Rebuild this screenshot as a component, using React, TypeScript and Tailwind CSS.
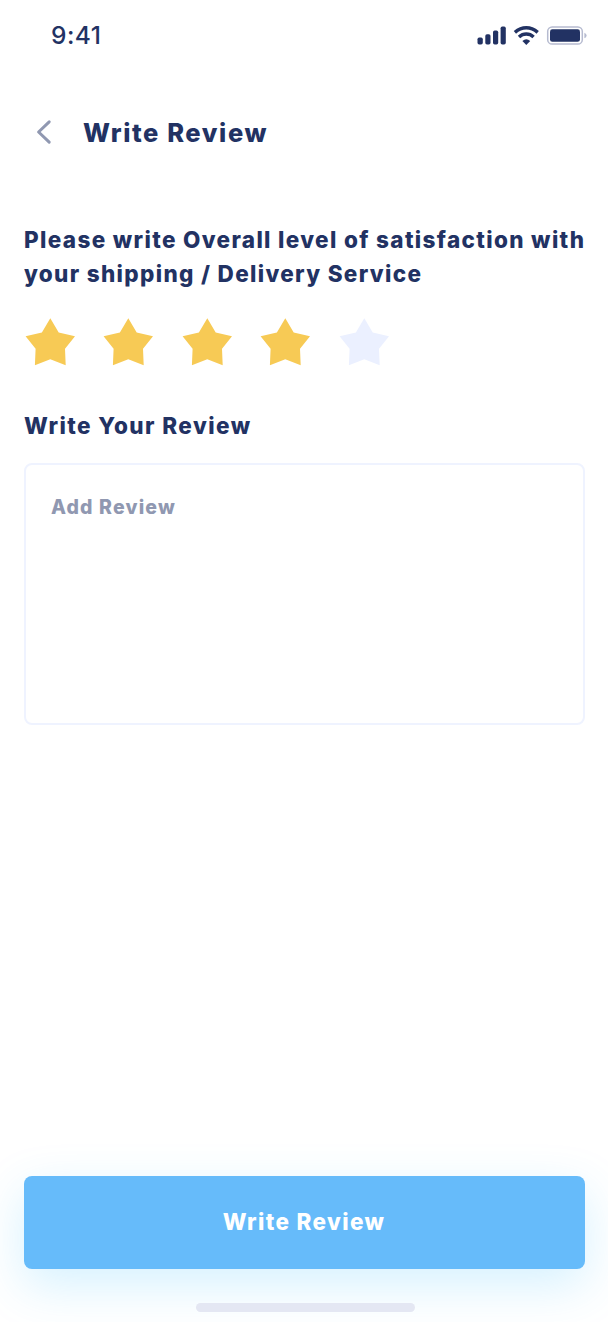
const STARS = [true, true, true, true, false];

function Star({ filled }: { filled: boolean }) {
  return (
    <svg viewBox="0 0 52 52" className={filled ? "size-[52px] text-[#f7ca55]" : "size-[52px] text-[#ebf0ff]"} fill="currentColor">
      <path d="M26.3 3.2 34.7 17.6 51 21.3 41 33.7 41.7 50.3 26.3 44.3 10.9 50.3 11.6 33.7 1.6 21.3 17.9 17.6Z" />
    </svg>
  );
}

function StatusBar() {
  return (
    <div className="flex h-[70px] items-start justify-between pl-[51px] pr-[21px] pt-[20px]">
      <span className="text-[24.5px] font-medium leading-[30px] tracking-[0.5px]">9:41</span>
      <svg width="112" height="22" viewBox="475 25 112 22" className="mt-[5px]" fill="currentColor">
        <rect x="477.5" y="37.5" width="5.3" height="7" rx="1.7" />
        <rect x="485.3" y="34.3" width="5.2" height="10.2" rx="1.7" />
        <rect x="493" y="30.5" width="5.2" height="14" rx="1.7" />
        <rect x="500.6" y="26.5" width="5.2" height="18" rx="1.7" />
        <g fill="none" stroke="currentColor" strokeWidth="3.5">
          <path d="M514.9 32.3Q520.2 27.8 526.3 27.8T537.7 32.3" />
          <path d="M519 37Q522.2 34.1 526.3 34.1T533.6 37" />
        </g>
        <path d="M522.4 40.9Q526.3 37.5 530.2 40.9L526.3 44.9Z" />
        <rect x="547.7" y="26.9" width="34.6" height="17.2" rx="4.4" fill="none" stroke="#b6bbd0" strokeWidth="1.5" />
        <rect x="550" y="29.3" width="30" height="12.5" rx="2.4" />
        <path d="M584.4 32.7Q586.6 33.6 586.6 35.5T584.4 38.3Z" fill="#b6bbd0" />
      </svg>
    </div>
  );
}

export default function App() {
  return (
    <main className="flex h-[1322px] w-[608px] flex-col overflow-hidden bg-white font-['Inter',sans-serif] font-extrabold text-[#223263]">
      <StatusBar />
      <header className="flex h-[124px] items-center pl-[36px]">
        <button aria-label="Back" className="text-[#9098b1]">
          <svg width="16" height="26" viewBox="0 0 16 26" fill="none" stroke="currentColor" strokeWidth="3" strokeLinecap="round" strokeLinejoin="round">
            <path d="M13.2 2.9 2.6 13 13.2 23.1" />
          </svg>
        </button>
        <h1 className="ml-[31px] whitespace-nowrap pt-[2px] text-[25.5px] leading-[36px] tracking-[1.6px]">Write Review</h1>
      </header>

      <section className="px-6 pt-[29px]">
        <h2 className="whitespace-nowrap text-[22.5px] leading-[34px]">
          <span className="block tracking-[1.35px]">Please write Overall level of satisfaction with</span>
          <span className="block tracking-[1.33px]">your shipping / Delivery Service</span>
        </h2>
        <div className="mt-[24px] flex gap-[26.4px]">
          {STARS.map((filled, i) => (
            <Star key={i} filled={filled} />
          ))}
        </div>
        <h2 className="mt-[42px] whitespace-nowrap text-[22.5px] leading-[34px] tracking-[1.43px]">Write Your Review</h2>
        <div className="mt-[20px] h-[262px] w-[561px] rounded-[8px] border-2 border-[#eff3ff] px-[25px] pt-[27px] text-[19.5px] leading-[30px] tracking-[1.15px] text-[#9098b1]">
          Add Review
        </div>
      </section>

      <footer className="mt-auto flex flex-col items-center pb-[10px]">
        <button className="h-[93px] w-[561px] rounded-[8px] bg-[#66bbfa] pb-[2px] text-[22.5px] tracking-[1.35px] text-white shadow-[0_16px_48px_rgba(64,191,255,0.22)]">
          Write Review
        </button>
        <div className="ml-[3px] mt-[34px] h-[9px] w-[219px] rounded-full bg-[#e4e7f3]" />
      </footer>
    </main>
  );
}
